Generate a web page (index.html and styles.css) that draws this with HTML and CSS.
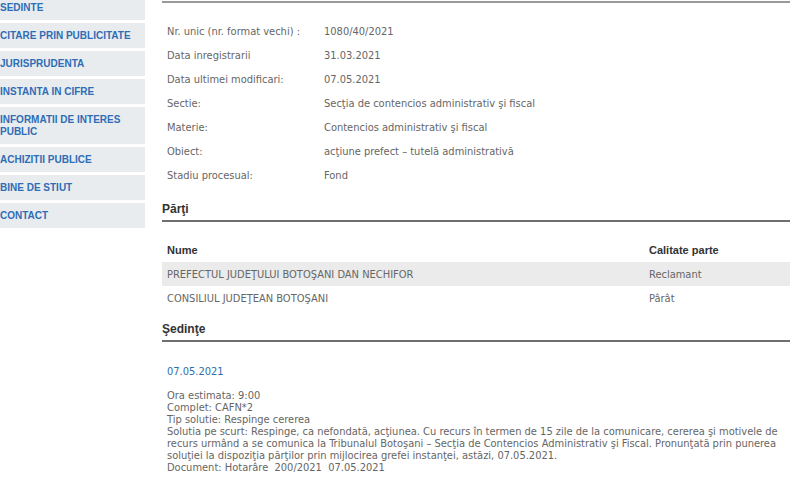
FILE: index.html
```html
<!DOCTYPE html>
<html lang="ro">
<head>
<meta charset="utf-8">
<title>Dosar</title>
<link rel="stylesheet" href="styles.css">
</head>
<body>
<div class="page">
  <nav class="sidebar">
    <a class="nav-item">SEDINTE</a>
    <a class="nav-item">CITARE PRIN PUBLICITATE</a>
    <a class="nav-item">JURISPRUDENTA</a>
    <a class="nav-item">INSTANTA IN CIFRE</a>
    <a class="nav-item nav-item-tall">INFORMATII DE INTERES PUBLIC</a>
    <a class="nav-item">ACHIZITII PUBLICE</a>
    <a class="nav-item">BINE DE STIUT</a>
    <a class="nav-item">CONTACT</a>
  </nav>
  <main class="content">
    <div class="info">
      <div class="info-row"><span class="info-label">Nr. unic (nr. format vechi) :</span><span class="info-value">1080/40/2021</span></div>
      <div class="info-row"><span class="info-label">Data inregistrarii</span><span class="info-value">31.03.2021</span></div>
      <div class="info-row"><span class="info-label">Data ultimei modificari:</span><span class="info-value">07.05.2021</span></div>
      <div class="info-row"><span class="info-label">Sectie:</span><span class="info-value">Secţia de contencios administrativ şi fiscal</span></div>
      <div class="info-row"><span class="info-label">Materie:</span><span class="info-value">Contencios administrativ şi fiscal</span></div>
      <div class="info-row"><span class="info-label">Obiect:</span><span class="info-value">acţiune prefect – tutelă administrativă</span></div>
      <div class="info-row"><span class="info-label">Stadiu procesual:</span><span class="info-value">Fond</span></div>
    </div>

    <h2 class="section-title">Părţi</h2>
    <div class="parties">
      <div class="party-row party-head"><span class="party-name">Nume</span><span class="party-role">Calitate parte</span></div>
      <div class="party-row party-alt"><span class="party-name">PREFECTUL JUDEŢULUI BOTOŞANI DAN NECHIFOR</span><span class="party-role">Reclamant</span></div>
      <div class="party-row"><span class="party-name">CONSILIUL JUDEŢEAN BOTOŞANI</span><span class="party-role">Pârât</span></div>
    </div>

    <h2 class="section-title section-title-2">Şedinţe</h2>
    <div class="hearing">
      <div class="hearing-date">07.05.2021</div>
      <div class="hearing-details">
        Ora estimata: 9:00<br>
        Complet: CAFN*2<br>
        Tip solutie: Respinge cererea<br>
        Solutia pe scurt: Respinge, ca nefondată, acţiunea. Cu recurs în termen de 15 zile de la comunicare, cererea şi motivele de recurs urmând a se comunica la Tribunalul Botoşani – Secţia de Contencios Administrativ şi Fiscal. Pronunţată prin punerea soluţiei la dispoziţia părţilor prin mijlocirea grefei instanţei, astăzi, 07.05.2021.<br>
        Document: Hotarâre&nbsp; 200/2021&nbsp; 07.05.2021
      </div>
    </div>
  </main>
</div>
</body>
</html>
```

FILE: styles.css
```css
html, body {
  margin: 0;
  padding: 0;
  background: #ffffff;
  overflow: hidden;
}

.page {
  display: flex;
  align-items: flex-start;
  width: 800px;
  height: 483px;
  overflow: hidden;
}

.sidebar {
  width: 145px;
  flex: none;
  display: flex;
  flex-direction: column;
  gap: 3px;
  margin-top: -5px;
}

.nav-item {
  display: flex;
  align-items: center;
  min-height: 25px;
  padding: 0 6px 0 0;
  box-sizing: border-box;
  background: #e9ecef;
  color: #2f6db5;
  font-family: "Liberation Sans", Arial, sans-serif;
  font-weight: bold;
  font-size: 10px;
  line-height: 12px;
}

.nav-item-tall {
  min-height: 37px;
}

.content {
  flex: none;
  width: 628px;
  margin-left: 17px;
  margin-top: 1px;
  border-top: 2px solid #9a9a9a;
  padding-top: 16px;
  font-family: "DejaVu Sans Condensed", "DejaVu Sans", sans-serif;
  font-size: 11px;
  color: #666666;
}

.info-row {
  display: flex;
  height: 24px;
  align-items: center;
  padding-left: 5px;
}

.info-label {
  width: 157px;
  flex: none;
}

.section-title {
  margin: 15px 0 0 0;
  padding-bottom: 3px;
  border-bottom: 2px solid #6e6e6e;
  font-family: "Liberation Sans", Arial, sans-serif;
  font-size: 12px;
  line-height: 15px;
  font-weight: bold;
  color: #333333;
}

.section-title-2 {
  margin-top: 12px;
}

.parties {
  margin-top: 16px;
}

.party-row {
  display: flex;
  align-items: center;
  height: 24px;
  padding-left: 5px;
}

.party-head {
  font-family: "Liberation Sans", Arial, sans-serif;
  font-weight: bold;
  color: #333333;
}

.party-alt {
  background: #ebebeb;
}

.party-name {
  width: 482px;
  flex: none;
}

.hearing {
  padding-left: 5px;
  margin-top: 23px;
}

.hearing-date {
  color: #2f6fa8;
  line-height: 14px;
}

.hearing-details {
  margin-top: 11px;
  line-height: 12px;
}
```
